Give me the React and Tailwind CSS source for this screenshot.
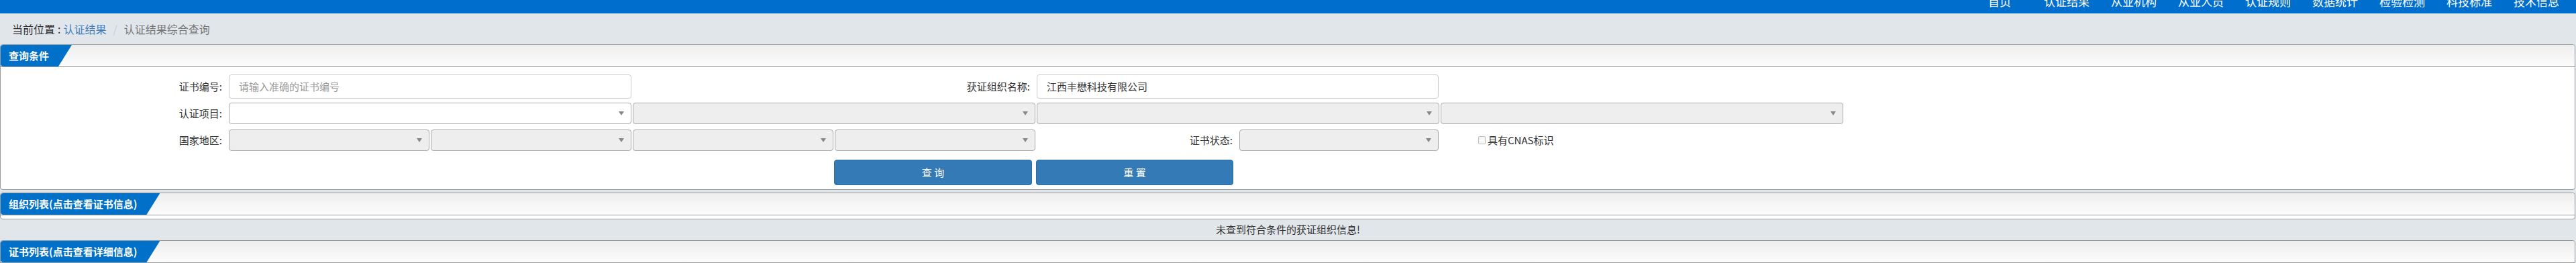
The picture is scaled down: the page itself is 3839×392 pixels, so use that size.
import React from 'react';

const font = { fontFamily: '"Noto Sans CJK SC", "Noto Sans", sans-serif' };

const navItems = ['首页', '认证结果', '从业机构', '从业人员', '认证规则', '数据统计', '检验检测', '科技标准', '技术信息'];

function Select({ width, disabled = true }) {
  return (
    <div
      className={`${width} h-[32px] border border-[#aaa] rounded-[4px] flex items-center justify-end pr-[10px] ${
        disabled ? 'bg-[#eee]' : 'bg-white'
      }`}
    >
      <div className="w-0 h-0 border-l-[4px] border-r-[4px] border-t-[6px] border-l-transparent border-r-transparent border-t-[#888]" />
    </div>
  );
}

function Label({ width, children }) {
  return (
    <div className={`${width} shrink-0 text-right pr-[10px] text-[15px] text-[#333]`}>{children}</div>
  );
}

function PanelHeader({ title }) {
  return (
    <div className="h-[33px] border-b border-[#999] bg-linear-to-b from-[#eeeeee] to-[#fcfcfc] rounded-t-[4px] flex">
      <div className="h-full bg-[#0070c9] rounded-tl-[4px] rounded-bl-[4px] pl-3 pr-[34px] flex items-center text-white text-[15px] font-bold [clip-path:polygon(0_0,100%_0,calc(100%_-_20px)_100%,0_100%)]">
        {title}
      </div>
    </div>
  );
}

export default function App() {
  return (
    <div className="w-[3839px] h-[392px] overflow-hidden bg-[#e1e6ea]" style={font}>
      {/* top nav, scrolled so only the bottom of the labels shows */}
      <div className="h-[20px] bg-[#006ecd] overflow-hidden flex justify-end pr-[9px]">
        {navItems.map((n) => (
          <div key={n} className="w-[100px] text-center text-white text-[17px] leading-none -mt-[7px]">
            {n}
          </div>
        ))}
      </div>

      {/* breadcrumb */}
      <div className="h-[46px] flex items-center pl-[18px] text-[16px]">
        <span className="text-[#333]">当前位置</span>
        <span className="text-[#333] mx-[4px]">:</span>
        <span className="text-[#3f7fc0]">认证结果</span>
        <span className="text-[#ccc] mx-[10px]">/</span>
        <span className="text-[#777]">认证结果综合查询</span>
      </div>

      {/* query panel */}
      <div className="border border-[#999] rounded-[4px] bg-white mr-[1px]">
        <PanelHeader title="查询条件" />
        <div className="pt-[11px] pb-[6px]">
          <div className="flex items-center">
            <Label width="w-[340px]">证书编号:</Label>
            <div className="w-[600px] h-[36px] border border-[#ccc] rounded-[4px] flex items-center pl-[14px] text-[15px] text-[#999]">
              请输入准确的证书编号
            </div>
            <Label width="w-[604px]">获证组织名称:</Label>
            <div className="w-[599px] h-[36px] border border-[#ccc] rounded-[4px] flex items-center pl-[14px] text-[15px] text-[#333]">
              江西丰懋科技有限公司
            </div>
          </div>

          <div className="flex items-center mt-[6px]">
            <Label width="w-[340px]">认证项目:</Label>
            <div className="flex gap-[2px]">
              <Select width="w-[600px]" disabled={false} />
              <Select width="w-[600px]" />
              <Select width="w-[600px]" />
              <Select width="w-[600px]" />
            </div>
          </div>

          <div className="flex items-center mt-[8px]">
            <Label width="w-[340px]">国家地区:</Label>
            <div className="flex gap-[2px]">
              <Select width="w-[299px]" />
              <Select width="w-[299px]" />
              <Select width="w-[299px]" />
              <Select width="w-[299px]" />
            </div>
            <Label width="w-[304px]">证书状态:</Label>
            <Select width="w-[297px]" />
            <div className="ml-[59px] flex items-center text-[15px] text-[#333]">
              <span className="w-[11px] h-[12px] border border-[#bbb] rounded-[2px] bg-[#f8f8f8] mr-[3px]" />
              具有CNAS标识
            </div>
          </div>

          <div className="flex mt-[13px] ml-[1242px] gap-[6px]">
            <button className="w-[295px] h-[38px] bg-[#337ab7] border border-[#2e6da4] rounded-[4px] text-white text-[15px]">
              查 询
            </button>
            <button className="w-[294px] h-[38px] bg-[#337ab7] border border-[#2e6da4] rounded-[4px] text-white text-[15px]">
              重 置
            </button>
          </div>
        </div>
      </div>

      {/* organisation list */}
      <div className="mt-[4px] border border-[#999] rounded-[4px] bg-white mr-[1px]">
        <PanelHeader title="组织列表(点击查看证书信息)" />
        <div className="h-[5px]" />
      </div>

      <div className="h-[31px] flex items-center justify-center text-[15px] text-[#333]">
        未查到符合条件的获证组织信息!
      </div>

      {/* certificate list */}
      <div className="border border-[#999] rounded-[4px] bg-white mr-[1px]">
        <PanelHeader title="证书列表(点击查看详细信息)" />
        <div className="h-[40px]" />
      </div>
    </div>
  );
}
